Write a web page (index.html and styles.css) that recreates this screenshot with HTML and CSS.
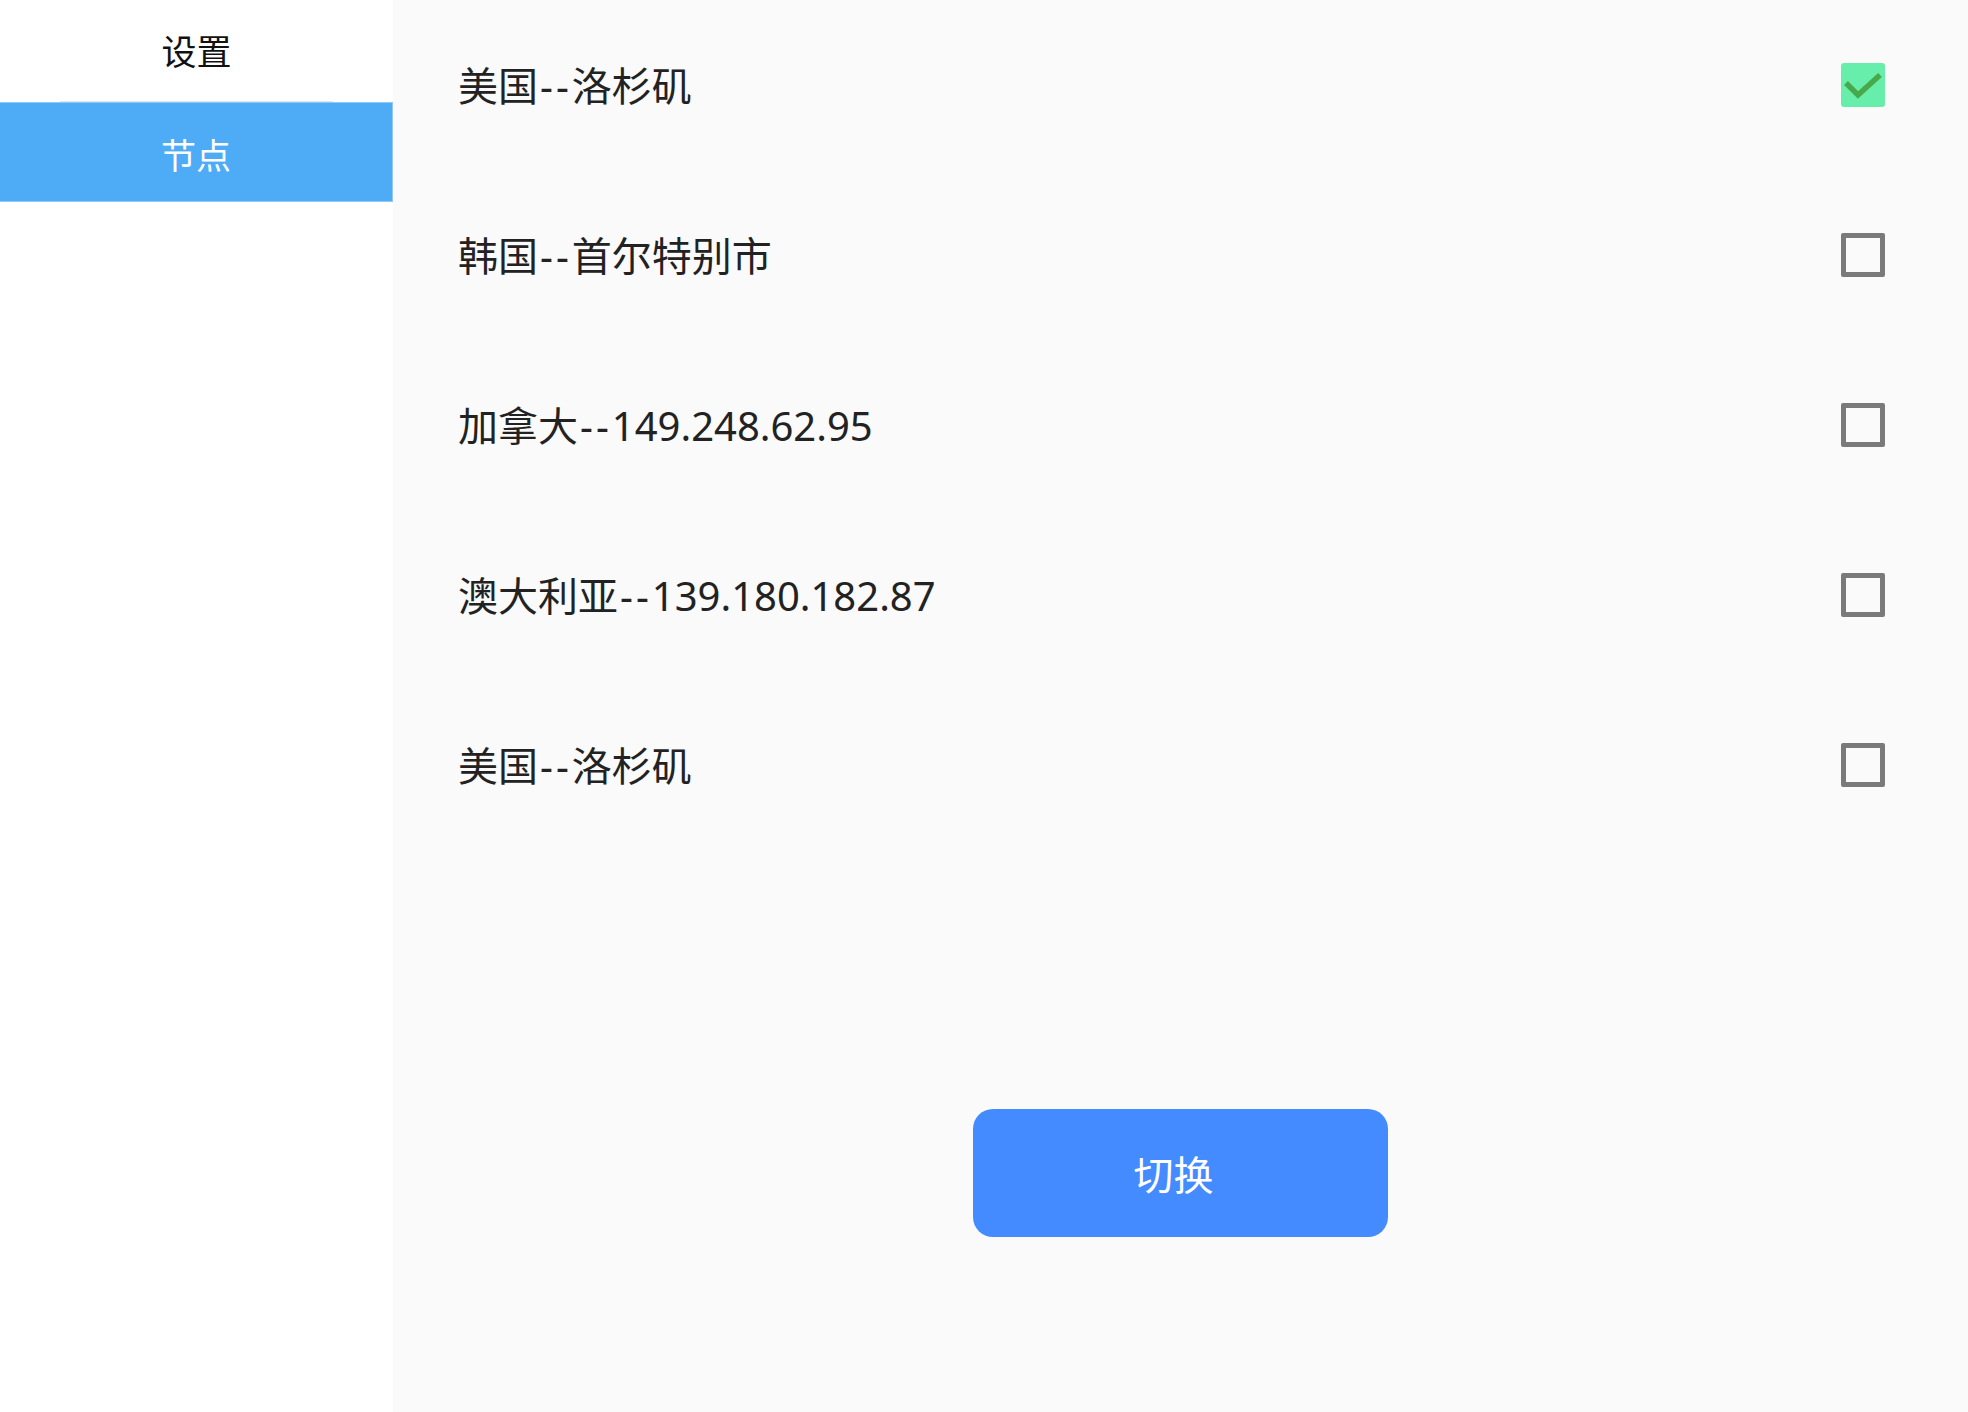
FILE: index.html
```html
<!DOCTYPE html>
<html lang="zh-CN">
<head>
<meta charset="utf-8">
<title>节点</title>
<link rel="stylesheet" href="styles.css">
</head>
<body>
<div class="app">
  <aside class="sidebar">
    <div class="nav-item">设置</div>
    <div class="nav-divider"></div>
    <div class="nav-item active">节点</div>
  </aside>
  <main class="main">
    <ul class="node-list">
      <li class="node">
        <span class="node-name">美国<span class="dash">--</span>洛杉矶</span>
        <span class="checkbox checked">
          <svg viewBox="0 0 44 44" width="44" height="44"><path d="M5 20 L17 32 L39 12" fill="none" stroke="#48a84c" stroke-width="5.5"/></svg>
        </span>
      </li>
      <li class="node">
        <span class="node-name">韩国<span class="dash">--</span>首尔特别市</span>
        <span class="checkbox"></span>
      </li>
      <li class="node">
        <span class="node-name">加拿大<span class="dash">--</span>149.248.62.95</span>
        <span class="checkbox"></span>
      </li>
      <li class="node">
        <span class="node-name">澳大利亚<span class="dash">--</span>139.180.182.87</span>
        <span class="checkbox"></span>
      </li>
      <li class="node">
        <span class="node-name">美国<span class="dash">--</span>洛杉矶</span>
        <span class="checkbox"></span>
      </li>
    </ul>
    <div class="actions">
      <button class="switch-btn">切换</button>
    </div>
  </main>
</div>
</body>
</html>
```
FILE: styles.css
```css
* { box-sizing: border-box; }
html, body {
  margin: 0;
  padding: 0;
  height: 100%;
}
body {
  font-family: "Noto Sans CJK SC", "Noto Sans", sans-serif;
  background: #fafafa;
}
.app {
  display: flex;
  height: 1412px;
}
.sidebar {
  width: 393px;
  flex: none;
  background: #ffffff;
  display: flex;
  flex-direction: column;
}
.nav-item {
  height: 101px;
  display: flex;
  align-items: center;
  justify-content: center;
  font-size: 35px;
  color: #111;
  padding-bottom: 2px;
}
.nav-divider {
  height: 1px;
  margin: 0 60px;
  background: #e4e4e4;
}
.nav-item.active {
  height: 100px;
  background: #4eabf5;
  color: #ffffff;
  border: 1px solid #8fcaf7;
  border-left: none;
  padding-bottom: 0;
  padding-top: 2px;
}
.main {
  flex: 1;
  background: #fafafa;
  display: flex;
  flex-direction: column;
}
.node-list {
  list-style: none;
  margin: 0;
  padding: 0 83px 0 65px;
}
.node {
  height: 170px;
  display: flex;
  align-items: center;
  justify-content: space-between;
}
.node-name {
  font-family: "Noto Sans", "Noto Sans CJK SC", sans-serif;
  font-size: 40px;
  color: #222;
  line-height: 1;
  padding-top: 2px;
}
.dash {
  padding-left: 2px;
  letter-spacing: 3px;
}
.checkbox {
  width: 44px;
  height: 44px;
  border: 5px solid #7a7a7a;
  border-radius: 2px;
  display: block;
}
.checkbox.checked {
  border: none;
  background: #68eeab;
  border-radius: 3px;
}
.checkbox svg { display: block; }
.actions {
  display: flex;
  justify-content: center;
  padding-top: 259px;
}
.switch-btn {
  width: 415px;
  height: 128px;
  border: none;
  border-radius: 20px;
  background: #448bff;
  color: #ffffff;
  font-family: "Noto Sans CJK SC", "Noto Sans", sans-serif;
  font-size: 40px;
  padding: 0 14px 0 0;
}
```
